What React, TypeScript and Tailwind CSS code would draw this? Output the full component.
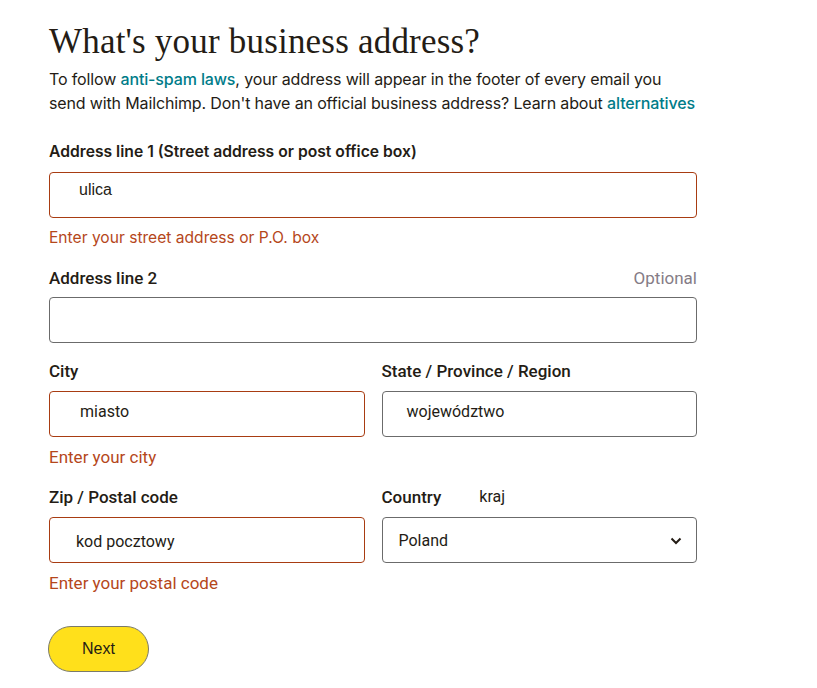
export default function App() {
  const errBorder = "border-[#a83c12]";
  return (
    <div className="min-h-screen w-full bg-white text-[#241c15]">
      <div className="w-[648px] ml-[49px] pt-[22px] pb-6">
        <h1 className="text-[35px] leading-[40px] font-['Liberation_Serif',serif] tracking-[0.2px] text-[#241c15]">
          What's your business address?
        </h1>

        <p className="mt-[5px] w-[680px] text-[16px] leading-[24px] tracking-[-0.14px] font-['Inter',sans-serif] text-[#241c15]">
          To follow <a className="text-[#007c89] font-medium">anti-spam laws</a>, your address will appear in the footer of every email you
          <br />
          send with Mailchimp. Don't have an official business address? Learn about{" "}
          <a className="text-[#007c89] font-medium">alternatives</a>
        </p>

        <form className="mt-[26px] flex flex-col">
          {/* Address line 1 */}
          <label className="text-[15.7px] leading-[22px] font-semibold font-['Inter',sans-serif]">
            Address line 1 (Street address or post office box)
          </label>
          <div className={`mt-[9px] h-[46px] rounded-[4px] border ${errBorder} flex items-center pl-[29px] pb-[10px] font-['Liberation_Sans',sans-serif] text-[16px]`}>
            ulica
          </div>
          <div className="mt-[9px] text-[15.6px] leading-[22px] text-[#b5471b] font-['Inter',sans-serif]">
            Enter your street address or P.O. box
          </div>

          {/* Address line 2 */}
          <div className="mt-[18px] flex items-center justify-between font-['Roboto',sans-serif]">
            <label className="text-[17px] leading-[22px] font-medium">Address line 2</label>
            <span className="text-[17px] leading-[22px] text-[#857c86]">Optional</span>
          </div>
          <div className="mt-[8px] h-[46px] rounded-[4px] border border-[#6b6b6b]" />

          {/* City / State */}
          <div className="mt-[17px] grid grid-cols-2 gap-x-[17px] font-['Roboto',sans-serif]">
            <div className="flex flex-col">
              <label className="text-[17px] leading-[22px] font-medium">City</label>
              <div className={`mt-[9px] h-[46px] rounded-[4px] border ${errBorder} flex items-center pl-[30px] pb-[4px] text-[16px]`}>
                miasto
              </div>
              <div className="mt-[9px] text-[17px] leading-[22px] text-[#b5471b]">Enter your city</div>
            </div>
            <div className="flex flex-col">
              <label className="text-[17px] leading-[22px] font-medium">State / Province / Region</label>
              <div className="mt-[9px] h-[46px] rounded-[4px] border border-[#6b6b6b] flex items-center pl-[24px] pb-[4px] text-[16px]">
                województwo
              </div>
            </div>
          </div>

          {/* Zip / Country */}
          <div className="mt-[18px] grid grid-cols-2 gap-x-[17px] font-['Roboto',sans-serif]">
            <div className="flex flex-col">
              <label className="text-[17px] leading-[22px] font-medium">Zip / Postal code</label>
              <div className={`mt-[9px] h-[46px] rounded-[4px] border ${errBorder} flex items-center pl-[26px] pt-[4px] text-[16px]`}>
                kod pocztowy
              </div>
              <div className="mt-[9px] text-[17px] leading-[22px] text-[#b5471b]">Enter your postal code</div>
            </div>
            <div className="flex flex-col">
              <div className="flex items-center">
                <label className="text-[17px] leading-[22px] font-medium">Country</label>
                <span className="ml-[38px] text-[16px] leading-[22px]">kraj</span>
              </div>
              <div className="mt-[9px] h-[46px] rounded-[4px] border border-[#6b6b6b] flex items-center justify-between pl-[16px] pr-[14px] pt-[2px] text-[16px]">
                <span>Poland</span>
                <svg width="12" height="8" viewBox="0 0 12 8" fill="none">
                  <path d="M1.5 1.5 6 6l4.5-4.5" stroke="#241c15" strokeWidth="2" />
                </svg>
              </div>
            </div>
          </div>

          <button
            type="button"
            className="mt-[32px] w-[101px] h-[46px] -ml-px rounded-full bg-[#ffe01b] border border-[#7a7a6a] text-[16px] font-medium font-['Liberation_Sans',sans-serif] text-[#241c15]"
          >
            Next
          </button>
        </form>
      </div>
    </div>
  );
}
